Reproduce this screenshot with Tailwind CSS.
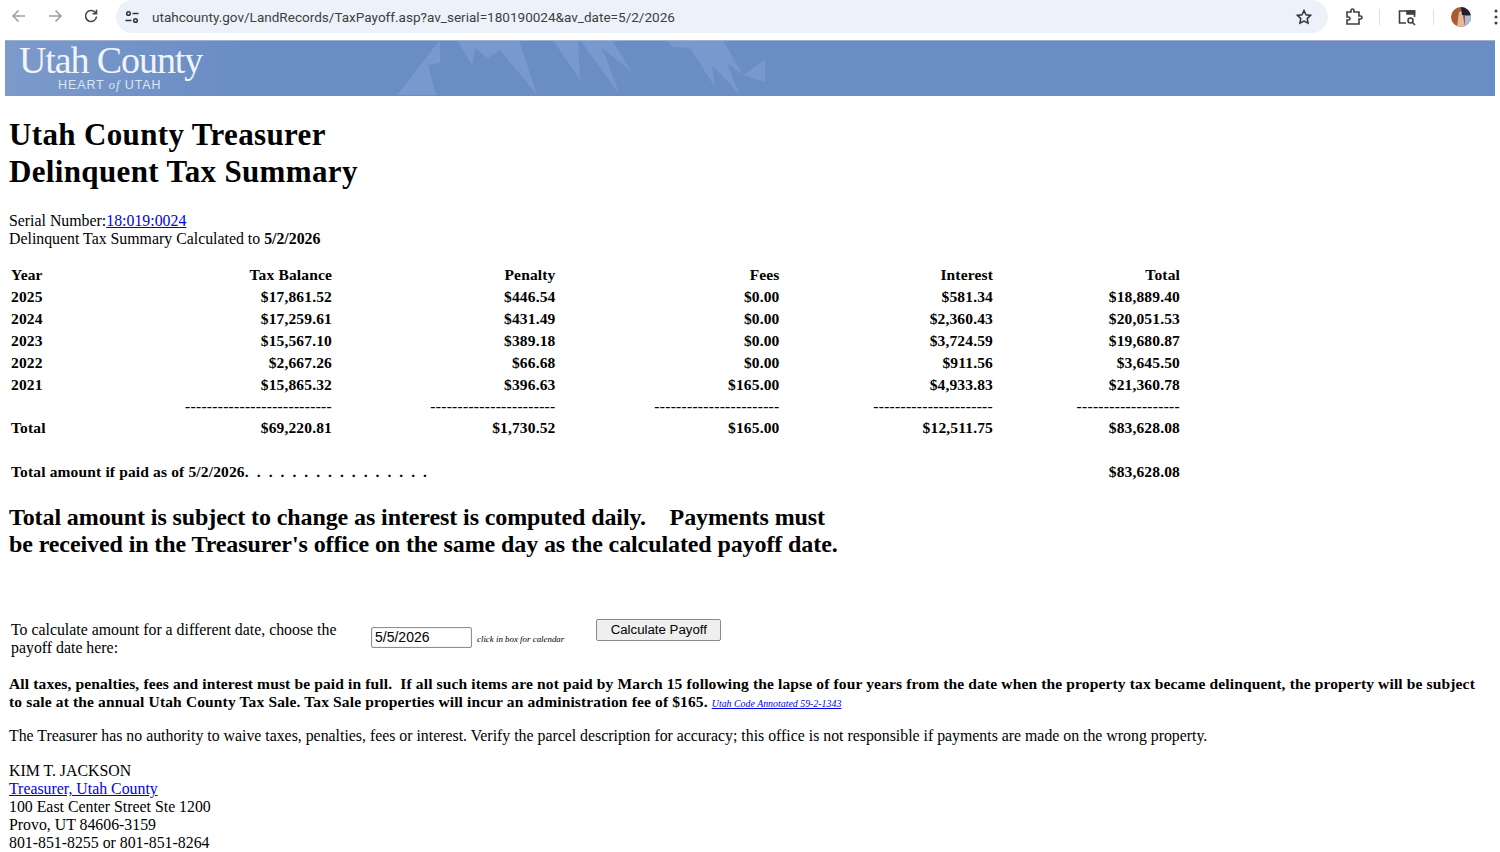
<!DOCTYPE html>
<html><head><meta charset="utf-8"><title>Delinquent Tax Summary</title>
<script src="https://cdn.jsdelivr.net/npm/@tailwindcss/browser@4"></script></head>
<body class="bg-white text-black overflow-hidden font-['Liberation_Serif',serif] h-[852px]">
<div class="h-[40px] flex items-center bg-white relative">
  <div class="flex items-center w-[116px] pl-[10px] gap-[18px] -mt-[8px]">
    <svg class="w-[18px] h-[18px]" viewBox="0 0 18 18" fill="none" stroke="#9a9da2" stroke-width="1.5"><path d="M15 9H3M8.500 3.500 3 9l5.500 5.500"/></svg>
    <svg class="w-[18px] h-[18px]" viewBox="0 0 18 18" fill="none" stroke="#9a9da2" stroke-width="1.500"><path d="M3 9h12M9.500 3.500 15 9l-5.500 5.500"/></svg>
    <svg class="w-[18px] h-[18px]" viewBox="0 0 18 18" fill="none" stroke="#45484c" stroke-width="1.600"><path d="M14.500 9.500a5.500 5.500 0 1 1-1.600-4.400L14.500 6.700M14.500 2.800v4h-4"/></svg>
  </div>
  <div class="w-[1212px] h-[33px] -mt-[7px] rounded-full bg-[#edf2fa] flex items-center pl-[8px] pr-[15px]">
    <svg class="w-[16px] h-[16px] shrink-0" viewBox="0 0 16 16" fill="none" stroke="#303438" stroke-width="1.500"><circle cx="4.500" cy="4.500" r="1.800"/><path d="M8.500 4.500h6M1.500 11.500h6"/><circle cx="11.500" cy="11.500" r="1.800"/></svg>
    <span class="ml-[12px] mt-[1px] text-[13.550px] text-[#3c4043] font-['Roboto',sans-serif] whitespace-nowrap">utahcounty.gov/LandRecords/TaxPayoff.asp?av_serial=180190024&amp;av_date=5/2/2026</span>
    <svg class="ml-auto w-[18px] h-[18px]" viewBox="0 0 18 18" fill="none" stroke="#303438" stroke-width="1.500"><path d="m9 2.500 2 4.300 4.600.6-3.400 3.200.9 4.600L9 13l-4.100 2.200.9-4.600-3.400-3.200 4.600-.6z"/></svg>
  </div>
  <div class="flex items-center -mt-[7px]">
    <svg class="ml-[16px] w-[20px] h-[20px]" viewBox="0 0 20 20" fill="none" stroke="#3c4043" stroke-width="1.600"><path d="M3 5h4V3.500a1.500 1.500 0 0 1 3 0V5h5v4h1.500a1.500 1.500 0 0 1 0 3H15v5H3v-4h1.500a1.500 1.500 0 0 0 0-3H3z"/></svg>
    <div class="ml-[15px] w-[1px] h-[16px] bg-[#d6e2f2]"></div>
    <svg class="ml-[17px] w-[20px] h-[20px]" viewBox="0 0 20 20" fill="none" stroke="#3c4043" stroke-width="1.600"><path d="M9 16H2.500V4h15v6"/><path d="M10 4h7.500v3H10z" fill="#3c4043"/><circle cx="13.500" cy="13.500" r="2.500"/><path d="m15.500 15.500 2.500 2.500"/></svg>
    <div class="ml-[16px] w-[1px] h-[16px] bg-[#d6e2f2]"></div>
    <svg class="ml-[17px] w-[20px] h-[20px]" viewBox="0 0 20 20"><defs><clipPath id="a"><circle cx="10" cy="10" r="10"/></clipPath></defs><g clip-path="url(#a)"><rect width="20" height="20" fill="#a85c30"/><path d="M6 20 8 5l3-1 3 16z" fill="#e3b89c"/><path d="M10 0h10v8H11z" fill="#1c2030"/><path d="M14 9h6v11h-6z" fill="#a9bbe0"/></g></svg>
    <svg class="ml-[23px] w-[4px] h-[16px]" viewBox="0 0 4 16" fill="#3c4043"><circle cx="2" cy="2" r="1.500"/><circle cx="2" cy="8" r="1.500"/><circle cx="2" cy="14" r="1.500"/></svg>
  </div>
</div>

<div class="ml-[5px] w-[1490px] h-[56px] border-t border-[#9fb0cc] bg-[linear-gradient(90deg,#7c9aca_0%,#6a8dc5_16%,#6a8dc5_100%)] relative overflow-hidden">
  <svg class="absolute left-[355px] -top-[1px] w-[420px] h-[56px]" viewBox="0 0 420 56" fill="#7f9ed0" fill-opacity="0.7"><path d="M37 55 80 0v23l-12 2 8 30zM97 0l15 25 3-17 13 10 12-8 37 45-18-55zM193 0l27 40-2-40zM220 0l40 55-18-47 30 24-20-32zM308 0l4 7 18 1 25 39-3-22 28 30-13-32 16 12 22-15v22l-22-7-20-35z"/></svg>
  <div class="absolute left-[14px] top-[1px] text-white font-['Liberation_Serif',serif] text-[38px] leading-[36px] tracking-[-1.100px] opacity-90 whitespace-nowrap">Utah County</div>
  <div class="absolute left-[53px] top-[37px] text-[#dbe5f4] font-['Liberation_Sans',sans-serif] text-[12.500px] leading-[15px] tracking-[0.900px] whitespace-nowrap">HEART <i class="font-['Liberation_Serif',serif]">of</i> UTAH</div>
</div>

<main class="pl-[9px]">
  <h1 class="mt-[20px] font-bold text-[31px] leading-[37px] tracking-[0.350px]">Utah County Treasurer<br>Delinquent Tax Summary</h1>
  <p class="mt-[22px] text-[15.850px] leading-[18px]">Serial Number:<a href="#" class="text-[#0000ee] underline">18:019:0024</a><br>Delinquent Tax Summary Calculated to <b>5/2/2026</b></p>

  <div class="ml-[2px] mt-[16px] w-[1169px] grid grid-cols-[64px_257px_223.500px_224px_213.500px_187px] text-right font-bold text-[15.500px] leading-[21.900px] tracking-[0.150px]">
    <div class="text-left">Year</div><div>Tax Balance</div><div>Penalty</div><div>Fees</div><div>Interest</div><div>Total</div>
    <div class="text-left">2025</div><div>$17,861.52</div><div>$446.54</div><div>$0.00</div><div>$581.34</div><div>$18,889.40</div>
    <div class="text-left">2024</div><div>$17,259.61</div><div>$431.49</div><div>$0.00</div><div>$2,360.43</div><div>$20,051.53</div>
    <div class="text-left">2023</div><div>$15,567.10</div><div>$389.18</div><div>$0.00</div><div>$3,724.59</div><div>$19,680.87</div>
    <div class="text-left">2022</div><div>$2,667.26</div><div>$66.68</div><div>$0.00</div><div>$911.56</div><div>$3,645.50</div>
    <div class="text-left">2021</div><div>$15,865.32</div><div>$396.63</div><div>$165.00</div><div>$4,933.83</div><div>$21,360.78</div>
    <div></div><div class="tracking-[0.280px] whitespace-nowrap">---------------------------</div><div class="tracking-[0.280px] whitespace-nowrap">-----------------------</div><div class="tracking-[0.280px] whitespace-nowrap">-----------------------</div><div class="tracking-[0.280px] whitespace-nowrap">----------------------</div><div class="tracking-[0.280px] whitespace-nowrap">-------------------</div>
    <div class="text-left">Total</div><div>$69,220.81</div><div>$1,730.52</div><div>$165.00</div><div>$12,511.75</div><div>$83,628.08</div>
    <div class="col-span-6 h-[21.900px]"></div>
    <div class="col-span-5 text-left whitespace-pre">Total amount if paid as of 5/2/2026.  <span class="tracking-[2.060px]">. . . . . . . . . . . . . . .</span></div><div>$83,628.08</div>
  </div>

  <p class="mt-[21px] w-[850px] font-bold text-[24px] leading-[27px] tracking-[-0.100px] whitespace-pre">Total amount is subject to change as interest is computed daily.    Payments must
be received in the Treasurer's office on the same day as the calculated payoff date.</p>

  <div class="mt-[62px] flex items-start h-[44px]">
    <div class="ml-[2px] w-[360px] text-[15.850px] leading-[18px] pt-[1px]">To calculate amount for a different date, choose the<br>payoff date here:</div>
    <input value="5/5/2026" class="w-[101px] h-[21px] mt-[7px] border border-[#8f8f8f] rounded-[2px] px-[3px] text-[14px] font-['Liberation_Sans',sans-serif] shadow-[inset_0_0_1px_#999]">
    <span class="ml-[5px] mt-[12px] text-[8.900px] italic leading-[14px] whitespace-nowrap">click in box for calendar</span>
    <button class="ml-[32px] -mt-[1px] w-[125px] h-[22px] bg-[#efefef] border border-[#8a8a8a] rounded-[2px] text-[13.250px] leading-none font-['Liberation_Sans',sans-serif]">Calculate Payoff</button>
  </div>

  <p class="mt-[11px] w-[1480px] font-bold text-[15.500px] leading-[18px] whitespace-nowrap tracking-[0.140px]">All taxes, penalties, fees and interest must be paid in full.&nbsp; If all such items are not paid by March 15 following the lapse of four years from the date when the property tax became delinquent, the property will be subject<br>to sale at the annual Utah County Tax Sale. Tax Sale properties will incur an administration fee of $165. <a href="#" class="text-[#0000ee] underline italic font-normal text-[9.900px] tracking-normal">Utah Code Annotated 59-2-1343</a></p>
  <p class="mt-[14px] text-[15.840px] leading-[18px]">The Treasurer has no authority to waive taxes, penalties, fees or interest. Verify the parcel description for accuracy; this office is not responsible if payments are made on the wrong property.</p>
  <p class="mt-[17px] text-[15.840px] leading-[18px]">KIM T. JACKSON<br><a href="#" class="text-[#0000ee] underline">Treasurer, Utah County</a><br>100 East Center Street Ste 1200<br>Provo, UT 84606-3159<br>801-851-8255 or 801-851-8264</p>
</main>
</body></html>
